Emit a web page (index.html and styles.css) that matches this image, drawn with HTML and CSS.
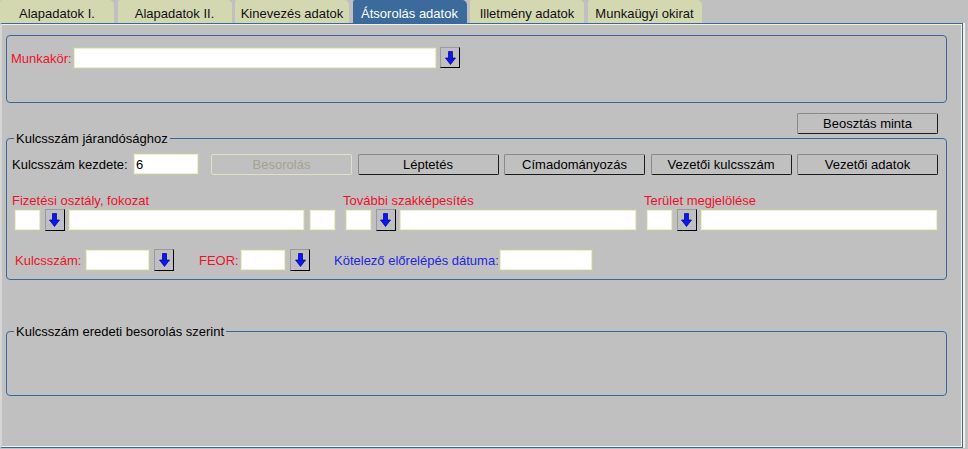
FILE: index.html
```html
<!DOCTYPE html>
<html lang="hu">
<head>
<meta charset="utf-8">
<title>Átsorolás adatok</title>
<link rel="stylesheet" href="styles.css">
</head>
<body>
<div class="tabs">
  <div class="tab">Alapadatok I.</div>
  <div class="tab">Alapadatok II.</div>
  <div class="tab">Kinevezés adatok</div>
  <div class="tab tab-active">Átsorolás adatok</div>
  <div class="tab">Illetmény adatok</div>
  <div class="tab">Munkaügyi okirat</div>
</div>
<div class="panel">
  <div class="group group-job">
    <div class="row">
      <span class="lbl lbl-red lbl-job">Munkakör:</span>
      <input class="inp inp-job" type="text">
      <button class="pick pick-job" type="button"><svg class="arrow" viewBox="0 0 11 14" width="11" height="14"><path d="M3.5 0.5h4v6.5h3l-5 6.5l-5-6.5h3z"/></svg></button>
    </div>
  </div>
  <div class="toolbar"><button class="btn" type="button">Beosztás minta</button></div>
  <div class="group group-key">
    <div class="legend">Kulcsszám járandósághoz</div>
    <div class="row row-start">
      <span class="lbl lbl-start">Kulcsszám kezdete:</span>
      <input class="inp inp-start" type="text" value="6">
      <div class="btns">
        <button class="btn" type="button" disabled>Besorolás</button>
        <button class="btn" type="button">Léptetés</button>
        <button class="btn" type="button">Címadományozás</button>
        <button class="btn" type="button">Vezetői kulcsszám</button>
        <button class="btn" type="button">Vezetői adatok</button>
      </div>
    </div>
    <div class="cols">
      <div class="col col-1">
        <div class="lbl lbl-red">Fizetési osztály, fokozat</div>
        <div class="fields">
          <input class="inp inp-s" type="text">
          <button class="pick" type="button"><svg class="arrow" viewBox="0 0 11 14" width="11" height="14"><path d="M3.5 0.5h4v6.5h3l-5 6.5l-5-6.5h3z"/></svg></button>
          <input class="inp inp-l1" type="text">
          <input class="inp inp-s" type="text">
        </div>
      </div>
      <div class="col col-2">
        <div class="lbl lbl-red">További szakképesítés</div>
        <div class="fields">
          <input class="inp inp-s" type="text">
          <button class="pick" type="button"><svg class="arrow" viewBox="0 0 11 14" width="11" height="14"><path d="M3.5 0.5h4v6.5h3l-5 6.5l-5-6.5h3z"/></svg></button>
          <input class="inp inp-l" type="text">
        </div>
      </div>
      <div class="col col-3">
        <div class="lbl lbl-red">Terület megjelölése</div>
        <div class="fields">
          <input class="inp inp-s" type="text">
          <button class="pick" type="button"><svg class="arrow" viewBox="0 0 11 14" width="11" height="14"><path d="M3.5 0.5h4v6.5h3l-5 6.5l-5-6.5h3z"/></svg></button>
          <input class="inp inp-l" type="text">
        </div>
      </div>
    </div>
    <div class="row row-codes">
      <span class="lbl lbl-red lbl-code">Kulcsszám:</span>
      <input class="inp inp-code" type="text">
      <button class="pick pick-gap" type="button"><svg class="arrow" viewBox="0 0 11 14" width="11" height="14"><path d="M3.5 0.5h4v6.5h3l-5 6.5l-5-6.5h3z"/></svg></button>
      <span class="lbl lbl-red lbl-feor">FEOR:</span>
      <input class="inp inp-feor" type="text">
      <button class="pick pick-gap" type="button"><svg class="arrow" viewBox="0 0 11 14" width="11" height="14"><path d="M3.5 0.5h4v6.5h3l-5 6.5l-5-6.5h3z"/></svg></button>
      <span class="lbl lbl-blue lbl-date">Kötelező előrelépés dátuma:</span>
      <input class="inp inp-date" type="text">
    </div>
  </div>
  <div class="group group-orig">
    <div class="legend">Kulcsszám eredeti besorolás szerint</div>
  </div>
</div>
</body>
</html>
```
FILE: styles.css
```css
* { box-sizing: border-box; }
html, body { margin: 0; padding: 0; }
body {
  width: 968px;
  height: 449px;
  overflow: hidden;
  background: #c0c0c0;
  font-family: "Liberation Sans", Arial, sans-serif;
  font-size: 13px;
  color: #000;
}

/* tabs */
.tabs { display: flex; gap: 3.5px; height: 23px; }
.tab {
  width: 114px;
  height: 23px;
  padding-top: 4px;
  line-height: 19px;
  text-align: center;
  white-space: nowrap;
  background: #d4d8b1;
  color: #111;
  border-radius: 2px 5px 0 0;
}
.tab-active { background: #3a6b9c; color: #fff; }

/* main panel */
.panel {
  width: 963px;
  height: 425px;
  border-top: 1px solid #3a6898;
  border-right: 1px solid #3a6898;
  border-bottom: 1px solid #3a6898;
  border-left: 2px solid #d6d6d6;
  box-shadow: inset 0 1px 0 #f2f2e4, inset -1px 0 0 #f2f2e4, inset 0 -1px 0 #f2f2e4, 2px 0 0 #f2f2e4;
  padding: 11px 0 0 4px;
}

.group {
  width: 941px;
  border: 1px solid #3a6898;
  border-radius: 4px;
}
.legend {
  width: fit-content;
  margin: -8px 0 0 2px;
  padding: 0 2px;
  line-height: 15px;
  background: #c0c0c0;
  white-space: nowrap;
}

.row { display: flex; align-items: center; }
.lbl { line-height: 15px; white-space: nowrap; }
.lbl-red { color: #f0102a; }
.lbl-blue { color: #2424e6; }

/* inputs and buttons */
.inp {
  height: 22px;
  margin: 0;
  padding: 0 2px;
  background: #fff;
  border: 1px solid #c9caa6;
  box-shadow: inset 0 0 0 1px #ececd6;
  font: inherit;
  color: #000;
  outline: none;
}
.pick {
  width: 20px;
  height: 22px;
  margin: 0;
  padding: 0;
  background: #c0c0c0;
  border: 1px solid;
  border-color: #9a9a9a #000 #000 #9a9a9a;
  display: flex;
  align-items: center;
  justify-content: center;
}
.arrow { display: block; fill: #0a14ff; stroke: #00007a; stroke-width: 0.7; }
.btn {
  width: 141px;
  height: 21px;
  margin: 0;
  padding: 0;
  background: #c0c0c0;
  border: 1px solid;
  border-color: #8a8a8a #1a1a1a #1a1a1a #8a8a8a;
  border-radius: 2px;
  font: inherit;
  color: #000;
  white-space: nowrap;
}
.btn:disabled { color: #a4a48c; border-color: #e0e0c4; }

/* Munkakör */
.group-job { height: 68px; padding: 11px 0 0 4px; }
.lbl-job { width: 62px; }
.inp-job { width: 364px; }
.pick-job { height: 21px; margin-left: 3px; align-self: flex-start; }

.toolbar {
  width: 941px;
  height: 21px;
  margin-top: 10px;
  padding-right: 9px;
  display: flex;
  justify-content: flex-end;
}

/* Kulcsszám járandósághoz */
.group-key { height: 142px; margin-top: 4px; padding-left: 5px; }
.row-start { margin-top: 7px; }
.lbl-start { width: 121px; }
.inp-start { width: 66px; }
.btns { display: flex; gap: 5.5px; margin-left: 12px; }

.cols { display: flex; margin-top: 18px; }
.col-1 { width: 331px; }
.col-2 { width: 301px; }
.col-3 { flex: 1; }
.fields { display: flex; gap: 3.5px; margin: 1px 0 0 2px; }
.inp-s { width: 27px; }
.inp-l1 { width: 237px; }
.inp-l { width: 238px; }

.row-codes { margin-top: 18px; }
.lbl-code { width: 70px; margin-left: 3px; }
.inp-code { width: 65px; }
.pick-gap { margin-left: 4px; }
.lbl-feor { width: 41px; margin-left: 25px; }
.inp-feor { width: 46px; }
.lbl-date { width: 165px; margin-left: 24px; }
.inp-date { width: 94px; }

/* Kulcsszám eredeti besorolás szerint */
.group-orig { height: 65px; margin-top: 51px; padding-left: 5px; }
```
